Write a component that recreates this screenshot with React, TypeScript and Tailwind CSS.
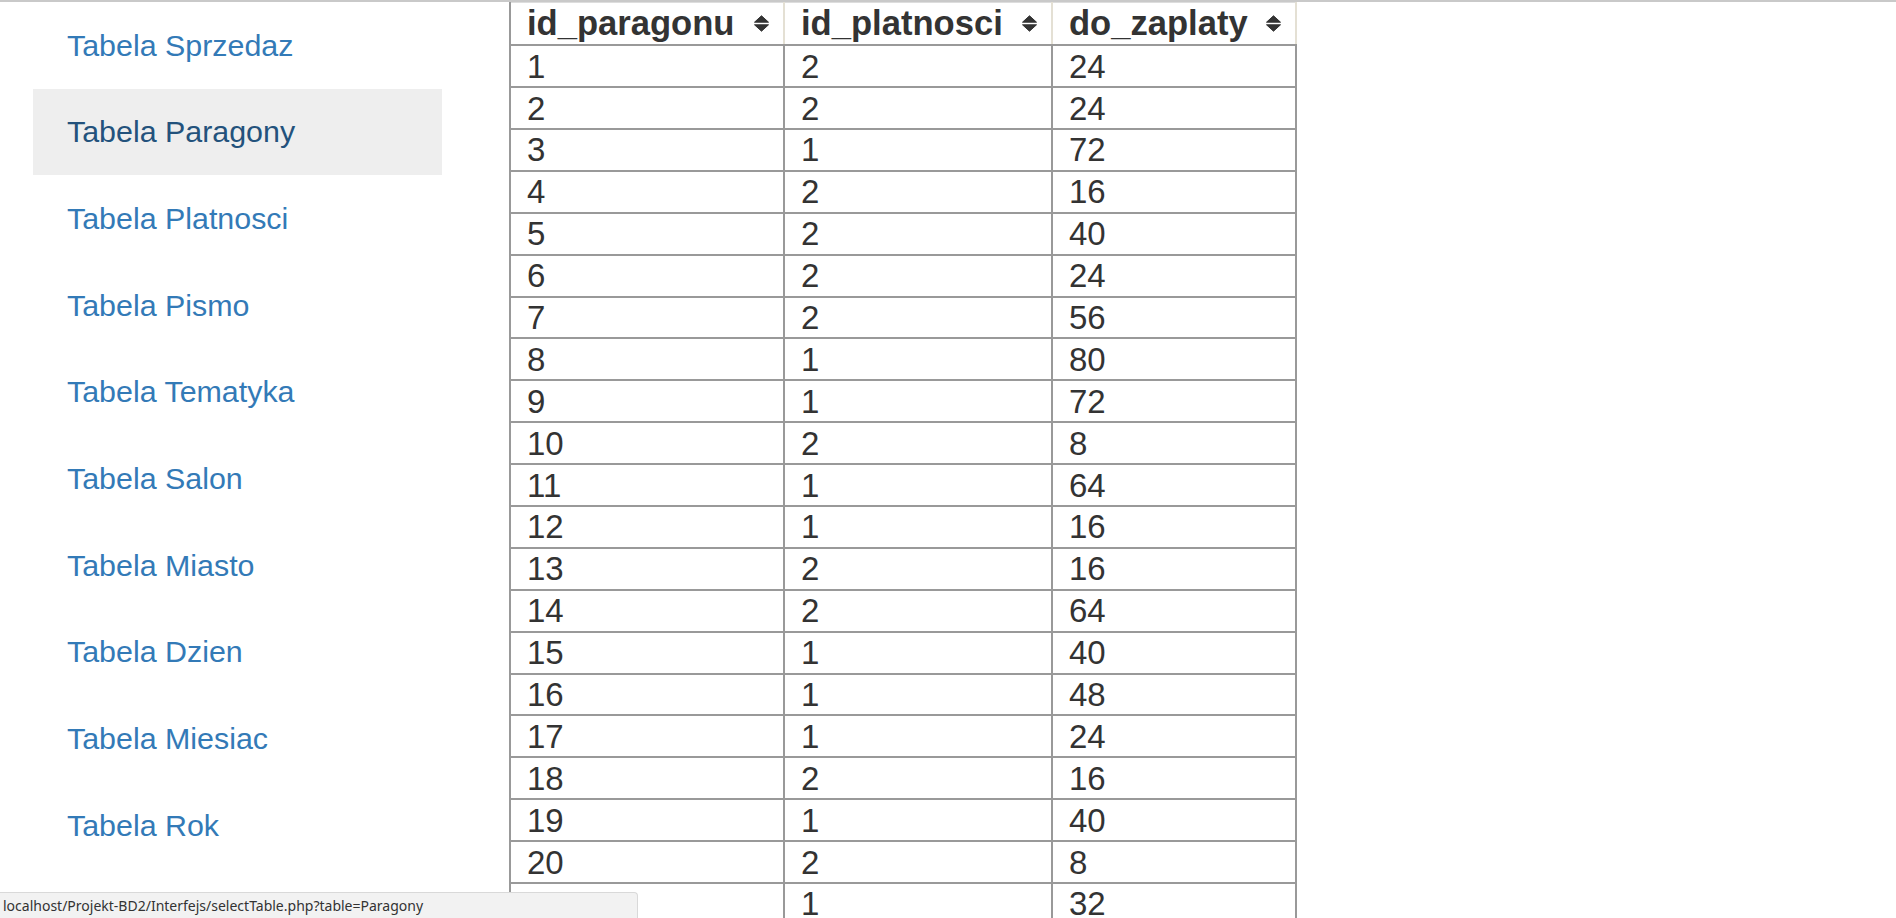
import React from "react";

const tables = [
  "Sprzedaz",
  "Paragony",
  "Platnosci",
  "Pismo",
  "Tematyka",
  "Salon",
  "Miasto",
  "Dzien",
  "Miesiac",
  "Rok",
];

const rows: [number, number, number][] = [
  [1, 2, 24],
  [2, 2, 24],
  [3, 1, 72],
  [4, 2, 16],
  [5, 2, 40],
  [6, 2, 24],
  [7, 2, 56],
  [8, 1, 80],
  [9, 1, 72],
  [10, 2, 8],
  [11, 1, 64],
  [12, 1, 16],
  [13, 2, 16],
  [14, 2, 64],
  [15, 1, 40],
  [16, 1, 48],
  [17, 1, 24],
  [18, 2, 16],
  [19, 1, 40],
  [20, 2, 8],
  [21, 1, 32],
];

function SortIcon() {
  return (
    <svg width="17" height="17" viewBox="0 0 17 17" className="shrink-0">
      <path d="M1.5 7.2 L8.5 0.8 L15.5 7.2 Z" fill="#333" stroke="#333" strokeLinejoin="round" />
      <path d="M1.5 9.8 L15.5 9.8 L8.5 16.2 Z" fill="#333" stroke="#333" strokeLinejoin="round" />
    </svg>
  );
}

function HeaderCell({ label, first }: { label: string; first?: boolean }) {
  return (
    <th
      className={`h-[42.7px] p-0 border-t border-b-2 border-b-[#999] border-t-[#ddd] border-r-2 border-r-[#e4e0d4] ${
        first ? "border-l-2 border-l-[#999]" : "border-l-2 border-l-[#e4e0d4]"
      }`}
    >
      <div className="flex items-center justify-between pl-[16px] pr-[13px] text-left text-[34.6px] font-bold leading-none text-[#333]">
        <span>{label}</span>
        <SortIcon />
      </div>
    </th>
  );
}

export default function App() {
  return (
    <div className="relative h-[918px] overflow-hidden border-t-2 border-[#c9c9c9] bg-white font-['Liberation_Sans',Arial,sans-serif]">
      <div className="flex items-start">
        {/* Menu tabel */}
        <nav className="ml-[33px] w-[409px] flex flex-col">
          {tables.map((t) => (
            <a
              key={t}
              href="#"
              className={`flex h-[86.7px] items-center pl-[34px] text-[30.4px] ${
                t === "Paragony" ? "bg-[#eee] text-[#23527c]" : "text-[#337ab7]"
              }`}
            >
              Tabela {t}
            </a>
          ))}
        </nav>

        {/* Tabela Paragony */}
        <table className="ml-[67px] w-[786px] table-fixed border-collapse">
          <colgroup>
            <col className="w-[274px]" />
            <col className="w-[268px]" />
            <col className="w-[244px]" />
          </colgroup>
          <thead>
            <tr>
              <HeaderCell label="id_paragonu" first />
              <HeaderCell label="id_platnosci" />
              <HeaderCell label="do_zaplaty" />
            </tr>
          </thead>
          <tbody>
            {rows.map((r) => (
              <tr key={r[0]}>
                {r.map((v, i) => (
                  <td
                    key={i}
                    className="h-[41.9px] border-2 border-[#999] py-0 pl-[16px] text-left text-[33px] leading-none text-[#333]"
                  >
                    {v}
                  </td>
                ))}
              </tr>
            ))}
          </tbody>
        </table>
      </div>

      {/* pasek statusu */}
      <div className="absolute bottom-0 left-0 flex h-[26px] w-[638px] items-center rounded-tr-[4px] border-t border-r border-[#d9d9d9] bg-[#f2f2f2] pl-[3px] font-['Noto_Sans',sans-serif] text-[14px] text-[#333]">
        localhost/Projekt-BD2/Interfejs/selectTable.php?table=Paragony
      </div>
    </div>
  );
}
